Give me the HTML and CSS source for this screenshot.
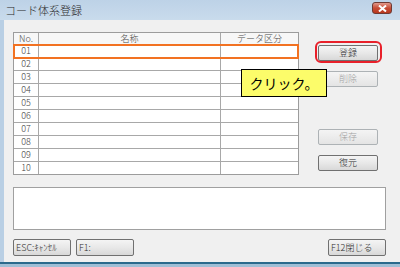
FILE: index.html
```html
<!DOCTYPE html>
<html lang="ja">

<head>
    <meta charset="UTF-8">
    <title>コード体系登録</title>
    <link rel="stylesheet" href="styles.css">
</head>

<body>
    <div class="window">
        <div class="titlebar">
            <span class="title">コード体系登録</span>
            <span class="close-btn">
                <svg width="9" height="7" viewBox="0 0 9 7">
                    <path d="M1 0.5 L8 6.5 M8 0.5 L1 6.5" stroke="#fff" stroke-width="2" />
                </svg>
            </span>
        </div>
        <div class="content">
            <div class="top">
                <div class="grid">
                    <div class="row head">
                        <div class="cell">No.</div>
                        <div class="cell">名称</div>
                        <div class="cell">データ区分</div>
                    </div>
                    <div class="row active">
                        <div class="cell">01</div>
                        <div class="cell"></div>
                        <div class="cell"></div>
                    </div>
                    <div class="row"><div class="cell">02</div><div class="cell"></div><div class="cell"></div></div>
                    <div class="row"><div class="cell">03</div><div class="cell"></div><div class="cell"></div></div>
                    <div class="row"><div class="cell">04</div><div class="cell"></div><div class="cell"></div></div>
                    <div class="row"><div class="cell">05</div><div class="cell"></div><div class="cell"></div></div>
                    <div class="row"><div class="cell">06</div><div class="cell"></div><div class="cell"></div></div>
                    <div class="row"><div class="cell">07</div><div class="cell"></div><div class="cell"></div></div>
                    <div class="row"><div class="cell">08</div><div class="cell"></div><div class="cell"></div></div>
                    <div class="row"><div class="cell">09</div><div class="cell"></div><div class="cell"></div></div>
                    <div class="row"><div class="cell">10</div><div class="cell"></div><div class="cell"></div></div>
                </div>
                <div class="side">
                    <div class="btn-group">
                        <button class="btn">登録</button>
                        <span class="ring"></span>
                    </div>
                    <button class="btn disabled">削除</button>
                    <button class="btn disabled gap">保存</button>
                    <button class="btn">復元</button>
                </div>
            </div>
            <div class="memo"></div>
            <div class="footer">
                <button class="btn fkey">ESC:ｷｬﾝｾﾙ</button>
                <button class="btn fkey">F1:</button>
                <button class="btn fkey right">F12閉じる</button>
            </div>
            <!-- 注釈の吹き出し -->
            <div class="callout">クリック。</div>
        </div>
        <div class="frame-bottom"></div>
    </div>
</body>

</html>
```

FILE: styles.css
```css
body {
    margin: 0;
    padding: 0;
    background: #f0f0f0;
    font-family: "Noto Sans CJK JP", "Liberation Sans", sans-serif;
}

.window {
    width: 400px;
    height: 267px;
    display: flex;
    flex-direction: column;
    background: #b9cfe4;
    box-sizing: border-box;
    padding-left: 4px;
    overflow: hidden;
}

.titlebar {
    height: 20px;
    margin-left: -4px;
    padding: 0 8px 0 5px;
    display: flex;
    align-items: center;
    justify-content: space-between;
    background: linear-gradient(to bottom, #bdd2e7, #c9dbec);
}

.title {
    font-size: 11px;
    font-weight: 300;
    color: #2a2a2a;
    margin-top: -1px;
}

.close-btn {
    width: 20px;
    height: 12px;
    margin-top: -4px;
    border: 1px solid #6e3a34;
    border-radius: 3px;
    background: linear-gradient(to bottom, #e29a8c, #c74c36 50%, #b8381f);
    display: flex;
    align-items: center;
    justify-content: center;
    box-sizing: border-box;
}

.content {
    flex: 1;
    position: relative;
    background: #f0f0f0;
    padding: 12px 0 0 9px;
}

.top {
    display: flex;
}

.grid {
    width: 286px;
    border: 1px solid #9c9c9c;
    box-sizing: border-box;
    background: #fff;
}

.row {
    display: grid;
    grid-template-columns: 25px 182px 1fr;
    height: 13px;
    border-bottom: 1px solid #a8a8a8;
    box-sizing: border-box;
}

.row:last-child {
    border-bottom: none;
    height: 12px;
}

.row.head {
    height: 12px;
    background: #f7f7f7;
    border-bottom-color: #9c9c9c;
}

.row.active {
    outline: 2px solid #f27222;
    outline-offset: -1px;
    position: relative;
}

.cell {
    border-right: 1px solid #a8a8a8;
    font-size: 9px;
    font-weight: 300;
    line-height: 12px;
    color: #3c3c3c;
    text-align: center;
}

.cell:last-child {
    border-right: none;
}

.head .cell {
    color: #4a4a4a;
    line-height: 11px;
}

.side {
    display: flex;
    flex-direction: column;
    padding: 13px 0 0 19px;
    gap: 10px;
}

.btn-group {
    position: relative;
}

.btn {
    display: block;
    width: 60px;
    height: 16px;
    padding: 0;
    border: 1px solid #707070;
    border-radius: 2px;
    background: linear-gradient(to bottom, #f4f4f4, #e8e8e8 50%, #d8d8d8);
    font-family: "Noto Sans CJK JP", "Liberation Sans", sans-serif;
    font-size: 9px;
    font-weight: 300;
    line-height: 14px;
    color: #2a2a2a;
}

.btn.disabled {
    color: #a3a3a3;
    border-color: #adb2b5;
    background: linear-gradient(to bottom, #f4f4f4, #e4e4e4);
}

.btn.gap {
    margin-top: 32px;
}

.ring {
    position: absolute;
    left: -3px;
    top: -4px;
    width: 67px;
    height: 22px;
    border: 2px solid #e8202a;
    border-radius: 6px;
    box-sizing: border-box;
}

.memo {
    width: 373px;
    height: 43px;
    margin-top: 12px;
    border: 1px solid #a0a0a0;
    box-sizing: border-box;
    background: #fff;
}

.footer {
    display: flex;
    gap: 5px;
    margin-top: 9px;
    width: 373px;
}

.btn.fkey {
    width: 58px;
    height: 17px;
    text-align: left;
    padding-left: 2px;
    font-size: 9px;
}

.btn.fkey.right {
    margin-left: auto;
}

.callout {
    position: absolute;
    left: 237px;
    top: 49px;
    width: 86px;
    height: 28px;
    border: 1px solid #000;
    box-sizing: border-box;
    background: #fcfc6a;
    font-size: 14px;
    line-height: 26px;
    text-align: center;
    color: #000;
}

.frame-bottom {
    height: 5px;
    margin-left: -4px;
    background: linear-gradient(to bottom, #2b6a8c 0, #2b6a8c 2px, #9fbfd6 2px);
}
```
